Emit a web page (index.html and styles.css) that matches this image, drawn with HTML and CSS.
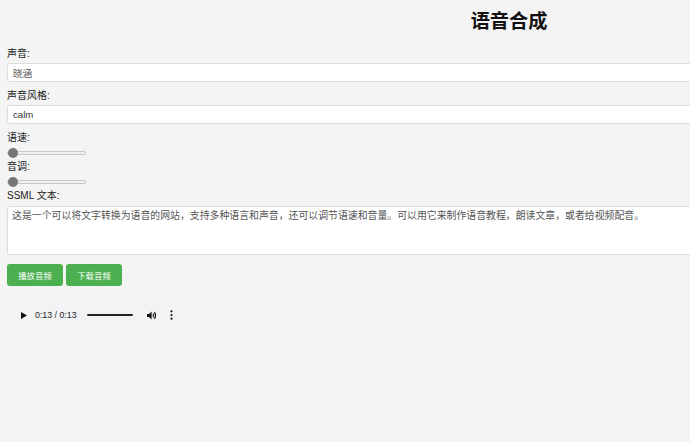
FILE: index.html
```
<!DOCTYPE html>
<html lang="zh-CN">
<head>
<meta charset="utf-8">
<title>语音合成</title>
<link rel="stylesheet" href="styles.css">
</head>
<body>
<div class="page">
  <h1 class="title">语音合成</h1>
  <label class="field-label" for="voice">声音:</label>
  <input class="text-input" id="voice" type="text" value="晓涵">
  <label class="field-label" for="style">声音风格:</label>
  <input class="text-input text-input-dark" id="style" type="text" value="calm">
  <label class="field-label" for="rate">语速:</label>
  <input class="slider" id="rate" type="range" min="0" max="100" value="0">
  <label class="field-label" for="pitch">音调:</label>
  <input class="slider" id="pitch" type="range" min="0" max="100" value="0">
  <label class="field-label label-tight" for="ssml">SSML 文本:</label>
  <textarea class="ssml" id="ssml">这是一个可以将文字转换为语音的网站，支持多种语言和声音，还可以调节语速和音量。可以用它来制作语音教程，朗读文章，或者给视频配音。</textarea>
  <div class="buttons">
    <button class="btn" type="button">播放音频</button>
    <button class="btn" type="button">下载音频</button>
  </div>
  <div class="player">
    <svg class="play" width="6" height="7" viewBox="0 0 6 7"><path d="M0 0 L6 3.5 L0 7 Z" fill="#111"/></svg>
    <span class="time">0:13 / 0:13</span>
    <span class="progress"></span>
    <svg class="vol" width="10" height="9" viewBox="0 0 10 9">
      <path d="M0 3 H2 L4.6 0.6 V8.4 L2 6 H0 Z" fill="#111"/>
      <path d="M6 2.6 Q7.3 4.5 6 6.4" stroke="#111" stroke-width="1.2" fill="none"/>
      <path d="M7.4 1.2 Q9.6 4.5 7.4 7.8" stroke="#111" stroke-width="1.2" fill="none"/>
    </svg>
    <svg class="more" width="3" height="10" viewBox="0 0 3 10">
      <circle cx="1.5" cy="1.3" r="1.1" fill="#111"/>
      <circle cx="1.5" cy="5" r="1.1" fill="#111"/>
      <circle cx="1.5" cy="8.7" r="1.1" fill="#111"/>
    </svg>
  </div>
</div>
</body>
</html>
```
FILE: styles.css
```
html, body {
  margin: 0;
  padding: 0;
  background: #f4f4f4;
  overflow: hidden;
}
body {
  font-family: "Liberation Sans", Arial, "Noto Sans CJK SC", sans-serif;
  color: #222;
}
.page {
  width: 1004px;
  padding: 0 7px;
}
.title {
  margin: 10px 0 13px;
  font-size: 19.2px;
  line-height: 24px;
  font-weight: bold;
  text-align: center;
  color: #111;
}
.field-label {
  display: block;
  font-size: 10px;
  line-height: 14px;
  height: 14px;
  margin-bottom: 2px;
  color: #222;
}
.label-tight {
  margin-bottom: 3px;
}
.text-input {
  display: block;
  box-sizing: border-box;
  width: 100%;
  height: 19px;
  margin: 0 0 7px;
  padding: 0 5px;
  border: 1px solid #dcdcdc;
  border-radius: 3px;
  background: #fff;
  font-family: "Liberation Sans", Arial, "Noto Sans CJK SC", sans-serif;
  font-size: 9.6px;
  color: #555;
  outline: none;
}
.text-input-dark {
  color: #333;
}
.slider {
  -webkit-appearance: none;
  appearance: none;
  display: block;
  width: 79px;
  height: 12px;
  margin: 2px 0 1px;
  padding: 0;
  background: transparent;
}
.slider::-webkit-slider-runnable-track {
  height: 4px;
  box-sizing: border-box;
  background: #efefef;
  border: 1px solid #c8c8c8;
  border-radius: 3px;
}
.slider::-webkit-slider-thumb {
  -webkit-appearance: none;
  appearance: none;
  width: 10px;
  height: 10px;
  margin-top: -4px;
  border-radius: 50%;
  background: #777;
  border: none;
}
.ssml {
  display: block;
  box-sizing: border-box;
  width: 100%;
  height: 49px;
  margin: 0 0 9px;
  padding: 1px 4px;
  border: 1px solid #dcdcdc;
  border-radius: 3px;
  background: #fff;
  font-family: "Noto Sans CJK SC", sans-serif;
  font-size: 9.9px;
  line-height: 14px;
  color: #555;
  resize: none;
  outline: none;
}
.buttons {
  display: flex;
  gap: 3px;
  margin-bottom: 13px;
}
.btn {
  width: 56px;
  height: 22px;
  padding: 0;
  border: none;
  border-radius: 3px;
  background: #4caf50;
  color: #fff;
  font-family: "Noto Sans CJK SC", sans-serif;
  font-size: 8.4px;
}
.player {
  display: flex;
  align-items: center;
  width: 180px;
  height: 32px;
  box-sizing: border-box;
  padding: 0 0 0 14px;
  border-radius: 16px;
  background: #f1f3f4;
}
.play {
  margin-right: 8px;
}
.time {
  font-family: "Liberation Sans", Arial, sans-serif;
  font-size: 8.8px;
  color: #1f1f1f;
  margin-right: 10px;
}
.progress {
  width: 46px;
  height: 2px;
  background: #222;
  border-radius: 1px;
  margin-right: 14px;
}
.vol {
  margin-right: 13px;
}
```
